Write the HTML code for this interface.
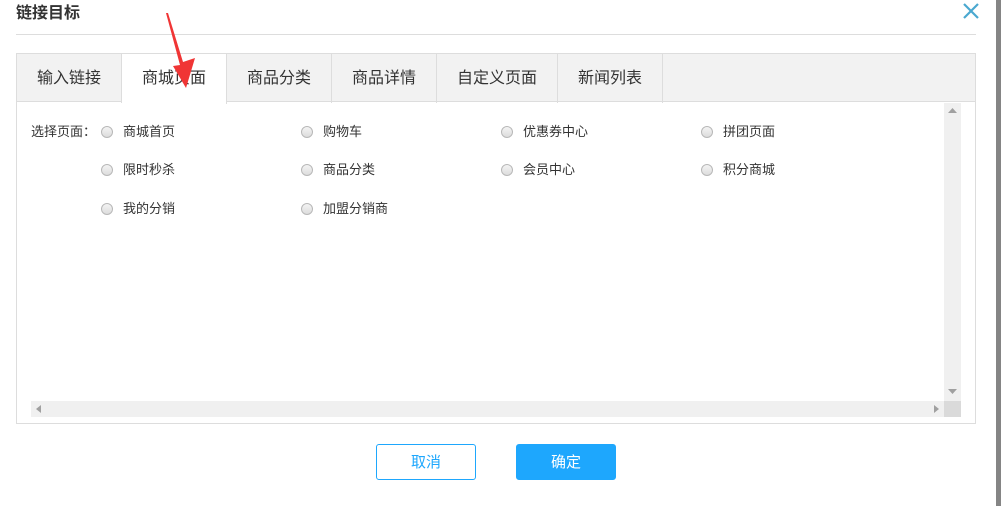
<!DOCTYPE html>
<html><head><meta charset="utf-8"><style>
*{margin:0;padding:0;box-sizing:border-box}
body{width:1001px;height:506px;background:#fff;position:relative;overflow:hidden;font-family:"Liberation Sans","Noto Sans CJK SC",sans-serif;color:#333}
.a{position:absolute}
.title{left:16px;top:4px;font-size:16px;line-height:20px;font-weight:bold;color:#333}
.hr{left:16px;top:34px;width:960px;height:1px;background:#ddd}
.box{left:16px;top:53px;width:960px;height:371px;border:1px solid #ddd}
.tabs{left:17px;top:54px;width:958px;height:48px;background:#f2f2f2;border-bottom:1px solid #ddd}
.tab{position:absolute;top:54px;height:49px;border-right:1px solid #ddd;font-size:16px;line-height:50px;text-align:center;color:#333}
.lbl{font-size:13px;line-height:16px;color:#333}
.r{width:12px;height:12px;border-radius:50%;border:1px solid #b8b8b8;background:linear-gradient(#f4f4f4,#dcdcdc)}
.btn{top:444px;width:100px;height:36px;border-radius:3px;font-size:15px;line-height:36px;text-align:center}
</style></head><body>
<div class="a title">链接目标</div>
<svg class="a" style="left:962px;top:2px" width="18" height="18"><path d="M2 2L16 16M16 2L2 16" stroke="#4aa8d0" stroke-width="2.2"/></svg>
<div class="a hr"></div>
<div class="a box"></div>
<div class="a tabs"></div>
<div class="tab" style="left:17px;width:105px">输入链接</div>
<div class="tab" style="left:122px;width:105px;background:#fff;height:50px">商城页面</div>
<div class="tab" style="left:227px;width:105px">商品分类</div>
<div class="tab" style="left:332px;width:105px">商品详情</div>
<div class="tab" style="left:437px;width:121px">自定义页面</div>
<div class="tab" style="left:558px;width:105px">新闻列表</div>
<div class="a" style="left:944px;top:103px;width:17px;height:298px;background:#f0f0f0"></div>
<div class="a" style="left:31px;top:401px;width:913px;height:16px;background:#f0f0f0"></div>
<div class="a" style="left:944px;top:401px;width:17px;height:16px;background:#dadada"></div>
<svg class="a" style="left:948px;top:108px" width="9" height="6"><path d="M0 5L4.5 0L9 5Z" fill="#a0a0a0"/></svg>
<svg class="a" style="left:948px;top:389px" width="9" height="6"><path d="M0 0L4.5 5L9 0Z" fill="#a0a0a0"/></svg>
<svg class="a" style="left:36px;top:405px" width="5" height="8"><path d="M5 0L0 4L5 8Z" fill="#a0a0a0"/></svg>
<svg class="a" style="left:934px;top:405px" width="5" height="8"><path d="M0 0L5 4L0 8Z" fill="#a0a0a0"/></svg>
<div class="a lbl" style="left:31px;top:124px">选择页面：</div>
<div class="a r" style="left:101px;top:126px"></div><div class="a lbl" style="left:123px;top:124px">商城首页</div>
<div class="a r" style="left:301px;top:126px"></div><div class="a lbl" style="left:323px;top:124px">购物车</div>
<div class="a r" style="left:501px;top:126px"></div><div class="a lbl" style="left:523px;top:124px">优惠券中心</div>
<div class="a r" style="left:701px;top:126px"></div><div class="a lbl" style="left:723px;top:124px">拼团页面</div>
<div class="a r" style="left:101px;top:164px"></div><div class="a lbl" style="left:123px;top:162px">限时秒杀</div>
<div class="a r" style="left:301px;top:164px"></div><div class="a lbl" style="left:323px;top:162px">商品分类</div>
<div class="a r" style="left:501px;top:164px"></div><div class="a lbl" style="left:523px;top:162px">会员中心</div>
<div class="a r" style="left:701px;top:164px"></div><div class="a lbl" style="left:723px;top:162px">积分商城</div>
<div class="a r" style="left:101px;top:203px"></div><div class="a lbl" style="left:123px;top:201px">我的分销</div>
<div class="a r" style="left:301px;top:203px"></div><div class="a lbl" style="left:323px;top:201px">加盟分销商</div>
<div class="a btn" style="left:376px;border:1px solid #1ea7fd;color:#1ea7fd;background:#fff">取消</div>
<div class="a btn" style="left:516px;background:#1ea7fd;color:#fff;border:1px solid #1ea7fd">确定</div>
<svg class="a" style="left:160px;top:10px" width="45" height="82"><path d="M6 3L8 3L23 52L35 48L26 78L13 56L20 55Z" fill="#f03535"/></svg>
<div class="a" style="left:996px;top:0;width:5px;height:506px;background:#858585"></div>
</body></html>
